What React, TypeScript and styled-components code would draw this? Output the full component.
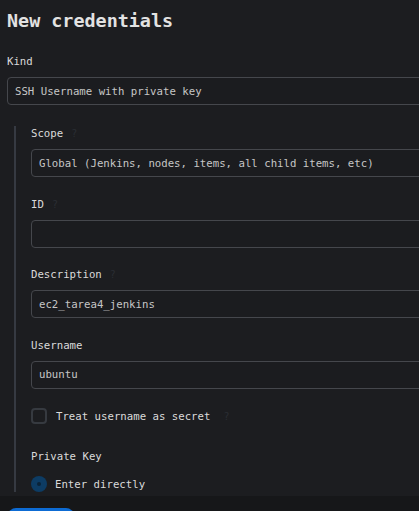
import styled, { createGlobalStyle } from "styled-components";

const GlobalStyle = createGlobalStyle`
  html, body {
    margin: 0;
    background: #1c1d20;
    overflow: hidden;
  }
  body {
    font-family: "DejaVu Sans Mono", "Liberation Mono", monospace;
    color: #d6d6d6;
  }
`;

export default function App() {
  return (
    <>
      <GlobalStyle />
      <Page>
        <Title>New credentials</Title>
        <Field $spacing={21}>
          <Label>Kind</Label>
          <Input>SSH Username with private key</Input>
        </Field>
        <Nested>
          <Field>
            <Label>
              Scope <Help>?</Help>
            </Label>
            <Input>Global (Jenkins, nodes, items, all child items, etc)</Input>
          </Field>
          <Field>
            <Label>
              ID <Help>?</Help>
            </Label>
            <Input />
          </Field>
          <Field>
            <Label>
              Description <Help>?</Help>
            </Label>
            <Input>ec2_tarea4_jenkins</Input>
          </Field>
          <Field>
            <Label>Username</Label>
            <Input>ubuntu</Input>
          </Field>
          <CheckRow>
            <Checkbox />
            <span>Treat username as secret</span>
            <Help>?</Help>
          </CheckRow>
          <Label>Private Key</Label>
          <RadioRow>
            <Radio />
            <span>Enter directly</span>
          </RadioRow>
        </Nested>
      </Page>
      <BottomBar>
        <PrimaryButton aria-label="Create" />
      </BottomBar>
    </>
  );
}

const Page = styled.main`
  width: 470px;
  padding: 10px 0 40px 7px;
  font-size: 10.7px;
`;

const Title = styled.h1`
  margin: 0 0 22px;
  font-size: 18.4px;
  line-height: 22px;
  font-weight: bold;
  color: #e2e2e2;
`;

const Field = styled.div<{ $spacing?: number }>`
  display: flex;
  flex-direction: column;
  gap: 7px;
  margin-bottom: ${(p) => p.$spacing ?? 19.5}px;
`;

const Label = styled.div`
  display: flex;
  align-items: center;
  gap: 4px;
  line-height: 16px;
  color: #dadada;
`;

const Help = styled.span`
  color: #2a2d33;
  font-size: 10px;
  margin-left: 4px;
`;

const Input = styled.div`
  box-sizing: border-box;
  height: 28px;
  padding: 0 7px;
  display: flex;
  align-items: center;
  border: 1px solid #45474c;
  border-radius: 4px;
  background: #1b1c1f;
  color: #c6c6c6;
  white-space: nowrap;
`;

const Nested = styled.section`
  margin-left: 7px;
  padding-left: 15px;
  border-left: 2px solid #363a42;
`;

const CheckRow = styled.label`
  display: flex;
  align-items: center;
  gap: 9px;
  height: 16px;
  margin-top: 19px;
  margin-bottom: 25px;
  color: #dadada;
`;

const Checkbox = styled.span`
  box-sizing: border-box;
  width: 16px;
  height: 16px;
  border: 2px solid #363a40;
  border-radius: 4px;
`;

const RadioRow = styled.label`
  display: flex;
  align-items: center;
  gap: 8px;
  height: 16px;
  margin-top: 11px;
  color: #dadada;
`;

const Radio = styled.span`
  box-sizing: border-box;
  width: 16px;
  height: 16px;
  border-radius: 50%;
  background: #0d3c64;
  display: flex;
  align-items: center;
  justify-content: center;

  &::after {
    content: "";
    width: 4px;
    height: 4px;
    border-radius: 50%;
    background: #0a2338;
  }
`;

const BottomBar = styled.footer`
  position: fixed;
  left: 0;
  right: 0;
  top: 496px;
  bottom: 0;
  background: #161719;
  padding: 12px 0 0 8px;
`;

const PrimaryButton = styled.button`
  display: block;
  width: 66px;
  height: 30px;
  border: none;
  border-radius: 8px;
  background: #0d6bd3;
`;
